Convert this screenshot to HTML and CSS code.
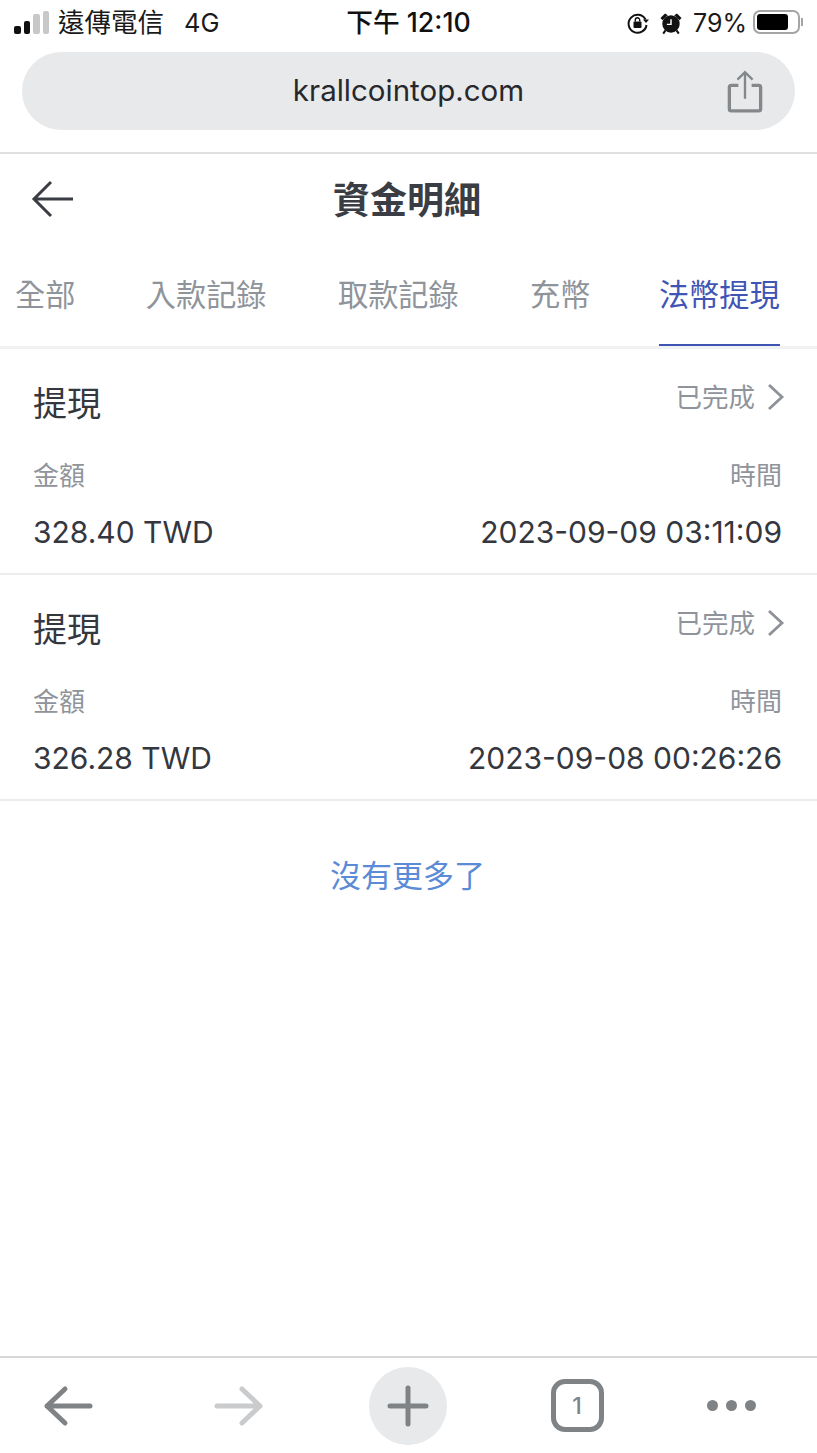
FILE: index.html

```html
<!DOCTYPE html>
<html lang="zh-Hant">
<head>
  <meta charset="UTF-8" />
  <meta name="viewport" content="width=device-width, initial-scale=1.0"/>
  <title>資金明細</title>
  <link rel="stylesheet" href="styles.css">
</head>
<body>
  <div class="status-bar">
    <div class="status-left">
      <div class="signal">
        <span class="bar bar-1"></span>
        <span class="bar bar-2"></span>
        <span class="bar bar-3"></span>
        <span class="bar bar-4"></span>
      </div>
      <span class="carrier">遠傳電信</span>
      <span class="network">4G</span>
    </div>
    <div class="clock">下午 12:10</div>
    <div class="status-right">
      <svg class="lock-icon" width="24" height="24" viewBox="0 0 24 24">
        <path d="M19.500 8.500A9 9 0 1 0 20.500 14" fill="none" stroke="#111" stroke-width="2"/>
        <path d="M17 8.500h6l-3 3.600z" fill="#111"/>
        <rect x="7.500" y="10.500" width="8" height="6.500" rx="1" fill="#111"/>
        <path d="M9.300 10.500V9a2.200 2.200 0 0 1 4.400 0v1.500" fill="none" stroke="#111" stroke-width="1.400"/>
      </svg>
      <svg class="alarm-icon" width="22" height="24" viewBox="0 0 24 24">
        <circle cx="12" cy="13" r="9.500" fill="#111"/>
        <path d="M12 8v5.500H7.500" fill="none" stroke="#fff" stroke-width="1.600"/>
        <path d="M0.500 6.500 5.500 1.500 8.500 3.500 2.800 9zM23.500 6.500 18.500 1.500 15.500 3.500 21.200 9z" fill="#111"/>
        <path d="M6 20l-2.500 3.500M18 20l2.500 3.500" stroke="#111" stroke-width="2.200"/>
      </svg>
      <span class="battery-pct">79%</span>
      <div class="battery"><span class="battery-fill"></span></div>
      <span class="battery-cap"></span>
    </div>
  </div>

  <div class="url-wrap">
    <div class="url-bar">
      <span class="url-text">krallcointop.com</span>
      <svg class="share-icon" width="36" height="44" viewBox="0 0 38 46">
        <path d="M12 16H4.500A2 2 0 0 0 2.500 18v23a2 2 0 0 0 2 2h29a2 2 0 0 0 2-2V18a2 2 0 0 0-2-2H26" fill="none" stroke="#85888b" stroke-width="3.500"/>
        <path d="M19 30V3M11 10l8-8 8 8" fill="none" stroke="#85888b" stroke-width="2.500"/>
      </svg>
    </div>
  </div>

  <div class="page-head">
    <svg class="back-icon" width="44" height="38" viewBox="0 0 44 38">
      <path d="M42 19H3M20 2 3 19l17 17" fill="none" stroke="#3a3d44" stroke-width="3"/>
    </svg>
    <h1>資金明細</h1>
  </div>

  <div class="tabs">
    <div class="tab">全部</div>
    <div class="tab">入款記錄</div>
    <div class="tab">取款記錄</div>
    <div class="tab">充幣</div>
    <div class="tab active">法幣提現</div>
  </div>

  <div class="record">
    <div class="record-top">
      <span class="record-title">提現</span>
      <span class="record-state">已完成
        <svg class="chevron" width="20" height="28" viewBox="0 0 20 28"><path d="M3 2l13 12L3 26" fill="none" stroke="#8e9298" stroke-width="2.800"/></svg>
      </span>
    </div>
    <div class="record-line labels"><span>金額</span><span>時間</span></div>
    <div class="record-line values"><span>328.40 TWD</span><span>2023-09-09 03:11:09</span></div>
  </div>

  <div class="record">
    <div class="record-top">
      <span class="record-title">提現</span>
      <span class="record-state">已完成
        <svg class="chevron" width="20" height="28" viewBox="0 0 20 28"><path d="M3 2l13 12L3 26" fill="none" stroke="#8e9298" stroke-width="2.800"/></svg>
      </span>
    </div>
    <div class="record-line labels"><span>金額</span><span>時間</span></div>
    <div class="record-line values"><span>326.28 TWD</span><span>2023-09-08 00:26:26</span></div>
  </div>

  <div class="no-more">沒有更多了</div>

  <div class="toolbar">
    <svg width="50" height="42" viewBox="0 0 50 42">
      <path d="M47 21H4M22 4 4 21l18 17" fill="none" stroke="#808386" stroke-width="5" stroke-linecap="round" stroke-linejoin="round"/>
    </svg>
    <svg width="50" height="42" viewBox="0 0 50 42">
      <path d="M3 21h43M28 4l18 17-18 17" fill="none" stroke="#c9cbcd" stroke-width="5" stroke-linecap="round" stroke-linejoin="round"/>
    </svg>
    <div class="plus-btn">
      <svg width="42" height="42" viewBox="0 0 42 42">
        <path d="M3 21h36M21 3v36" stroke="#808386" stroke-width="5" stroke-linecap="round"/>
      </svg>
    </div>
    <div class="tab-count">1</div>
    <div class="more-dots"><span></span><span></span><span></span></div>
  </div>
</body>
</html>
```

FILE: styles.css

```css
html, body {
  height: 100%;
}
body {
  margin: 0;
  height: 100vh;
  display: flex;
  flex-direction: column;
  overflow: hidden;
  background: #fff;
  font-family: Inter, "Noto Sans CJK TC", sans-serif;
  color: #34373e;
}

/* status bar */
.status-bar {
  height: 44px;
  display: grid;
  grid-template-columns: 1fr auto 1fr;
  align-items: center;
  padding: 0 14px;
  color: #1a1a1a;
}
.status-left, .status-right {
  display: flex;
  align-items: center;
}
.status-right {
  justify-content: flex-end;
}
.signal {
  display: flex;
  align-items: flex-end;
  gap: 3px;
  height: 23px;
  margin-right: 9px;
}
.bar {
  width: 6.5px;
  border-radius: 2px;
  background: #111;
}
.bar-1 { height: 8px; }
.bar-2 { height: 13px; }
.bar-3 { height: 20px; background: #c8c8c8; }
.bar-4 { height: 23px; background: #c8c8c8; }
.carrier {
  font-size: 26.500px;
  padding-bottom: 4px;
}
.network {
  font-size: 25.500px;
  margin-left: 20px;
}
.clock {
  font-size: 26.700px;
  font-weight: 500;
  color: #111;
  padding-bottom: 4px;
}
.lock-icon {
  margin: 2px 10px 0 0;
}
.alarm-icon {
  margin: 2px 11px 0 0;
}
.battery-pct {
  font-size: 25px;
  margin: 2px 6px 0 0;
}
.battery {
  width: 47px;
  height: 24px;
  border: 2px solid #a5a5a5;
  border-radius: 7px;
  padding: 2px;
  box-sizing: border-box;
}
.battery-fill {
  display: block;
  width: 80%;
  height: 100%;
  background: #000;
  border-radius: 3px;
}
.battery-cap {
  width: 2px;
  height: 8px;
  margin-left: 1px;
  background: #a5a5a5;
}

/* browser url bar */
.url-wrap {
  padding: 8px 22px 22px;
  border-bottom: 2px solid #dfe0e2;
}
.url-bar {
  position: relative;
  height: 78px;
  border-radius: 39px;
  background: #e8e9eb;
  display: flex;
  align-items: center;
  justify-content: center;
}
.url-text {
  font-size: 29.500px;
  color: #26282b;
  padding-bottom: 3px;
}
.share-icon {
  position: absolute;
  right: 32px;
  top: 18px;
}

/* page header */
.page-head {
  position: relative;
  height: 91px;
  box-sizing: border-box;
  padding: 0 3px 3px 0;
  display: flex;
  align-items: center;
  justify-content: center;
}
.page-head h1 {
  margin: 0;
  font-size: 37px;
  font-weight: 700;
  color: #3a3d44;
}
.back-icon {
  position: absolute;
  left: 31px;
  top: 26px;
}

/* tabs */
.tabs {
  height: 104px;
  display: flex;
  gap: 71.400px;
  padding-left: 15px;
  border-bottom: 3px solid #f0f1f2;
  box-sizing: border-box;
}
.tab {
  height: 101px;
  padding-top: 28px;
  box-sizing: border-box;
  font-size: 30.200px;
  line-height: 44px;
  color: #8f949b;
}
.tab:first-child {
  margin-right: -1px;
}
.tab.active {
  margin-left: -3px;
  color: #3f55b5;
  border-bottom: 2px solid #3f55b5;
}

/* withdrawal records */
.record {
  height: 226px;
  box-sizing: border-box;
  padding: 0 35px 0 33px;
  border-bottom: 2px solid #eceded;
}
.record-top {
  display: flex;
  justify-content: space-between;
  align-items: flex-start;
  padding-top: 30px;
  height: 102px;
  box-sizing: border-box;
}
.record-title {
  font-size: 34px;
  line-height: 50px;
  color: #34373e;
}
.record-state {
  display: flex;
  align-items: center;
  gap: 11px;
  font-size: 26.500px;
  line-height: 44px;
  color: #8f949b;
  margin: -4px -4px 0 0;
}
.record-line {
  display: flex;
  justify-content: space-between;
}
.labels {
  font-size: 26px;
  line-height: 50px;
  color: #8f949b;
}
.values {
  font-size: 30px;
  line-height: 44px;
  margin-top: 9px;
  color: #34373e;
}

.no-more {
  margin-top: 53px;
  padding-right: 2px;
  text-align: center;
  font-size: 31px;
  line-height: 44px;
  color: #5b8bd6;
}

/* browser toolbar */
.toolbar {
  margin-top: auto;
  height: 97px;
  box-sizing: border-box;
  border-top: 2px solid #d6d7d9;
  display: grid;
  grid-template-columns: 136px 206px 132px 206px 102px;
  justify-items: center;
  align-items: center;
}
.plus-btn {
  width: 78px;
  height: 78px;
  border-radius: 50%;
  background: #e8e9eb;
  display: flex;
  align-items: center;
  justify-content: center;
}
.tab-count {
  width: 53px;
  height: 53px;
  border: 5px solid #808386;
  border-radius: 14px;
  box-sizing: border-box;
  display: flex;
  align-items: center;
  justify-content: center;
  font-size: 23px;
  font-weight: 500;
  color: #808386;
}
.more-dots {
  display: flex;
  gap: 8px;
}
.more-dots span {
  width: 11px;
  height: 11px;
  border-radius: 50%;
  background: #808386;
}
```
